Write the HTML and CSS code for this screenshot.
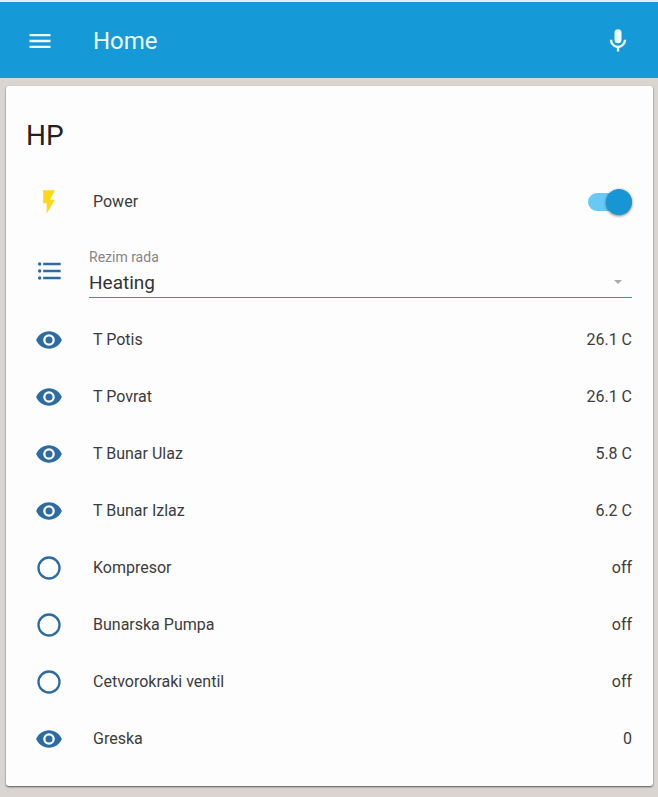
FILE: index.html
```html
<!DOCTYPE html>
<html lang="sr-Latn">
<head>
    <meta charset="UTF-8">
    <meta name="viewport" content="width=device-width, initial-scale=1.0">
    <title>Home</title>
    <link rel="stylesheet" href="styles.css">
</head>
<body>

    <!-- shared icons -->
    <svg class="icon-defs" aria-hidden="true">
        <symbol id="icon-eye" viewBox="0 0 24 24">
            <path d="M12 9a3 3 0 1 0 0 6 3 3 0 0 0 0-6zm0 8a5 5 0 1 1 0-10 5 5 0 0 1 0 10zm0-12.5C7 4.500 2.730 7.610 1 12c1.730 4.390 6 7.500 11 7.500s9.270-3.110 11-7.500c-1.730-4.390-6-7.500-11-7.500z"/>
        </symbol>
        <symbol id="icon-circle" viewBox="0 0 24 24">
            <path d="M12 20a8 8 0 1 1 0-16 8 8 0 0 1 0 16zm0-18a10 10 0 1 0 0 20 10 10 0 0 0 0-20z"/>
        </symbol>
    </svg>

    <header class="toolbar">
        <button class="icon-button" type="button" aria-label="Menu">
            <svg class="icon" viewBox="0 0 24 24"><path d="M3 6h18v2H3zm0 5h18v2H3zm0 5h18v2H3z"/></svg>
        </button>
        <h1 class="toolbar-title">Home</h1>
        <button class="icon-button" type="button" aria-label="Voice">
            <svg class="icon" viewBox="0 0 24 24"><path d="M12 2a3 3 0 0 1 3 3v6a3 3 0 0 1-6 0V5a3 3 0 0 1 3-3zm7 9c0 3.530-2.610 6.440-6 6.930V21h-2v-3.070c-3.390-.49-6-3.400-6-6.930h2a5 5 0 0 0 10 0h2z"/></svg>
        </button>
    </header>

    <main class="card">
        <h2 class="card-title">HP</h2>

        <div class="row">
            <svg class="icon icon-on" viewBox="0 0 24 24"><path d="M7 2v11h3v9l7-12h-4l4-8z"/></svg>
            <label class="name" for="power">Power</label>
            <input class="toggle" id="power" type="checkbox" role="switch" checked>
        </div>

        <div class="row row-select">
            <svg class="icon" viewBox="0 0 24 24"><path d="M7 5h15v2H7zm0 6h15v2H7zm0 6h15v2H7zM4 4.500a1.500 1.500 0 1 1 0 3 1.500 1.500 0 0 1 0-3zm0 6a1.500 1.500 0 1 1 0 3 1.500 1.500 0 0 1 0-3zm0 6a1.500 1.500 0 1 1 0 3 1.500 1.500 0 0 1 0-3z"/></svg>
            <div class="field">
                <label class="field-label" for="mode">Rezim rada</label>
                <div class="field-box">
                    <select class="field-select" id="mode">
                        <option selected>Heating</option>
                    </select>
                    <span class="arrow"></span>
                </div>
            </div>
        </div>

        <div class="row">
            <svg class="icon"><use href="#icon-eye"/></svg>
            <span class="name">T Potis</span>
            <span class="state">26.1 C</span>
        </div>
        <div class="row">
            <svg class="icon"><use href="#icon-eye"/></svg>
            <span class="name">T Povrat</span>
            <span class="state">26.1 C</span>
        </div>
        <div class="row">
            <svg class="icon"><use href="#icon-eye"/></svg>
            <span class="name">T Bunar Ulaz</span>
            <span class="state">5.8 C</span>
        </div>
        <div class="row">
            <svg class="icon"><use href="#icon-eye"/></svg>
            <span class="name">T Bunar Izlaz</span>
            <span class="state">6.2 C</span>
        </div>
        <div class="row">
            <svg class="icon"><use href="#icon-circle"/></svg>
            <span class="name">Kompresor</span>
            <span class="state">off</span>
        </div>
        <div class="row">
            <svg class="icon"><use href="#icon-circle"/></svg>
            <span class="name">Bunarska Pumpa</span>
            <span class="state">off</span>
        </div>
        <div class="row">
            <svg class="icon"><use href="#icon-circle"/></svg>
            <span class="name">Cetvorokraki ventil</span>
            <span class="state">off</span>
        </div>
        <div class="row">
            <svg class="icon"><use href="#icon-eye"/></svg>
            <span class="name">Greska</span>
            <span class="state">0</span>
        </div>
    </main>

</body>
</html>
```
FILE: styles.css
```css
* { box-sizing: border-box; }

body {
    margin: 0;
    background-color: #dbd5d2;
    color: #3c3c3c;
    font-family: Roboto, "Liberation Sans", sans-serif;
    font-size: 16px;
    line-height: 24px;
}

.icon-defs { display: none; }

.icon {
    flex: none;
    width: 28px;
    height: 28px;
    fill: #2c6ca3;
}

/* top bar */
.toolbar {
    display: flex;
    align-items: center;
    height: 78px;
    padding: 2px 26px 0;
    border-top: 2px solid #e4eef3;
    background-color: #169ad7;
    color: #effcff;
}

.toolbar-title {
    flex: 1;
    margin: 0 0 0 39px;
    font-size: 24px;
    font-weight: 400;
}

.icon-button {
    display: flex;
    padding: 0;
    border: 0;
    background: none;
    cursor: pointer;
}

.icon-button .icon { fill: #effcff; }

/* card */
.card {
    margin: 8px 5px 10px 6px;
    padding: 0 21px 19px 20px;
    border-radius: 3px;
    background-color: #fdfdfd;
    box-shadow: 0 1px 2px rgba(0, 0, 0, 0.6);
}

.card-title {
    margin: 0;
    padding: 32px 0 19px;
    color: #222;
    font-size: 28px;
    font-weight: 400;
    line-height: 36px;
}

.row {
    display: flex;
    align-items: center;
    height: 57px;
    padding-left: 9px;
}

.row-select { height: 81px; }

.name {
    flex: 1;
    margin-left: 30px;
}

.icon-on { fill: #fdd816; }

/* switch */
.toggle {
    appearance: none;
    display: flex;
    align-items: center;
    justify-content: flex-end;
    width: 44px;
    height: 18px;
    margin: 0;
    border-radius: 9px;
    background-color: #69c9f6;
    cursor: pointer;
}

.toggle::before {
    content: "";
    flex: none;
    width: 26px;
    height: 26px;
    border-radius: 50%;
    background-color: #1796d5;
    box-shadow: 0 1px 3px rgba(0, 0, 0, 0.5);
}

.toggle:not(:checked) { justify-content: flex-start; }

/* drop-down */
.field {
    flex: 1;
    margin-left: 26px;
    padding-top: 4px;
}

.field-label {
    display: block;
    color: #858585;
    font-size: 14px;
    line-height: 20px;
}

.field-box {
    display: flex;
    align-items: center;
    border-bottom: 1px solid #55879f;
}

.field-select {
    appearance: none;
    flex: 1;
    height: 30px;
    padding: 0;
    border: 0;
    background: none;
    color: #333;
    font-family: inherit;
    font-size: 19px;
}

.arrow {
    margin-right: 10px;
    border: 4px solid transparent;
    border-top-color: #aaa;
    border-bottom: 0;
}
```
